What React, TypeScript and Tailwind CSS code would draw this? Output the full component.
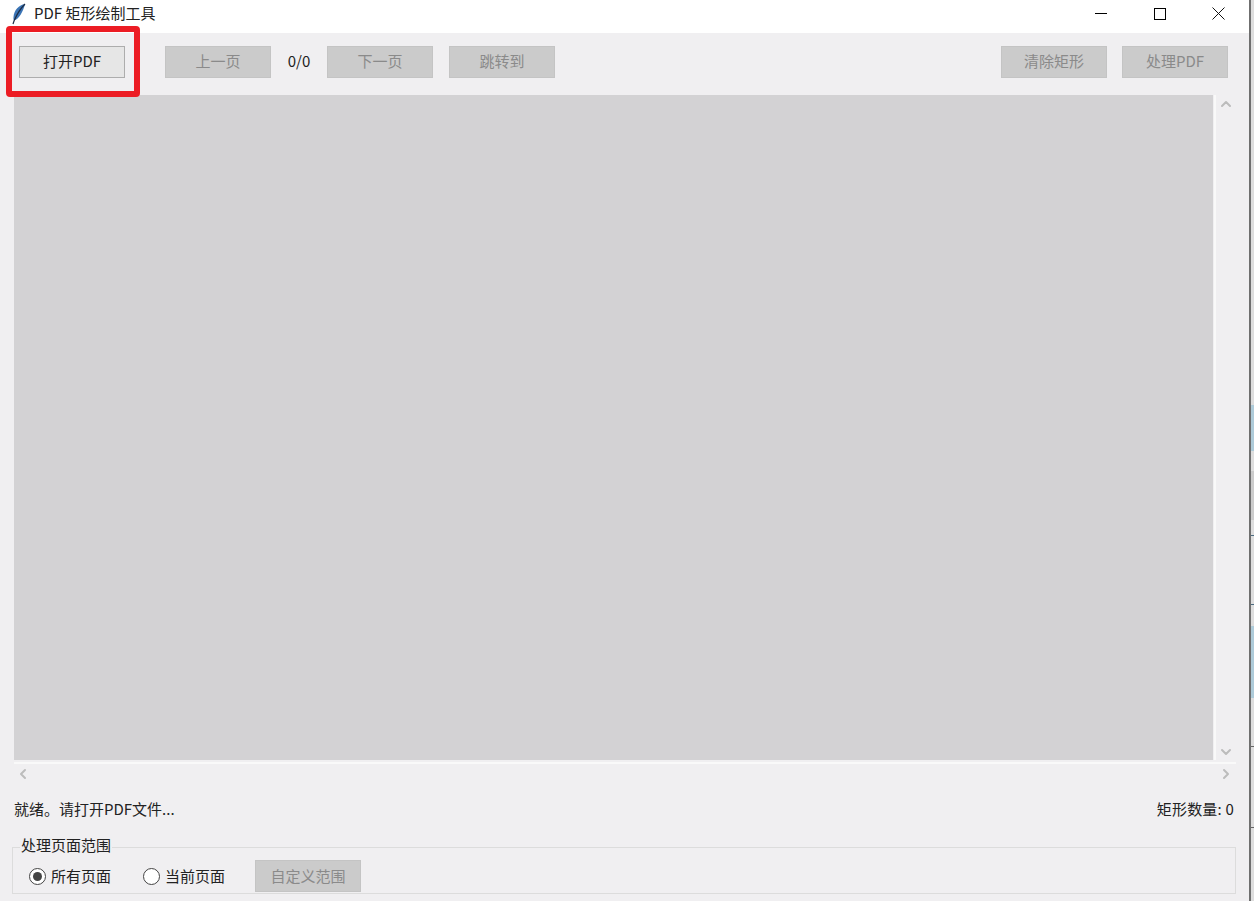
import { ChevronUp, ChevronDown, ChevronLeft, ChevronRight } from "lucide-react";

const font = "font-['Noto_Sans_CJK_SC','Liberation_Sans',sans-serif]";

function TkButton({ label, active = false, className = "" }: { label: string; active?: boolean; className?: string }) {
  return (
    <div
      className={`flex h-[32px] w-[106px] items-center justify-center border text-[15px] ${
        active
          ? "border-[#adadad] bg-[#e6e6e6] text-[#222222]"
          : "border-[#c4c4c4] bg-[#cbcbcb] text-[#8a8a8a]"
      } ${className}`}
    >
      {label}
    </div>
  );
}

function Radio({ label, checked = false }: { label: string; checked?: boolean }) {
  return (
    <div className="flex items-center gap-[5px] text-[15px] text-[#222222]">
      <div className="flex h-[17px] w-[17px] items-center justify-center rounded-full border border-[#444444] bg-white">
        {checked && <div className="h-[9px] w-[9px] rounded-full bg-[#444444]" />}
      </div>
      {label}
    </div>
  );
}

export default function App() {
  return (
    <div className={`relative flex h-[901px] w-[1254px] overflow-hidden bg-white ${font}`}>
      <div className="flex w-[1249px] shrink-0 flex-col bg-[#f0eff1]">
        {/* title bar */}
        <div className="flex h-[33px] items-center justify-between bg-white pb-[6px] pl-[11px] pr-[1px]">
          <div className="flex items-center gap-[7px] text-[15px] text-[#222222]">
            <svg width="16" height="22" viewBox="0 0 16 22">
              <path d="M14 1C8 2 3 7 2.5 14c-.2 2 0 3 .6 3.6C8 16 12 9 14 1z" fill="#3b74b5" />
              <path d="M14 1C10 5 6 11 3.2 17.5L2 21" fill="none" stroke="#1c2c44" strokeWidth="1.2" />
            </svg>
            <span>PDF 矩形绘制工具</span>
          </div>
          <div className="flex items-center">
            <div className="flex h-[27px] w-[59px] items-center justify-center">
              <div className="h-px w-[12px] bg-black" />
            </div>
            <div className="flex h-[27px] w-[59px] items-center justify-center">
              <div className="h-[12px] w-[12px] border border-black" />
            </div>
            <div className="flex h-[27px] w-[59px] items-center justify-center">
              <svg width="13" height="13" viewBox="0 0 13 13" stroke="#111111" strokeWidth="1">
                <path d="M.5.5l12 12M12.5.5l-12 12" />
              </svg>
            </div>
          </div>
        </div>

        {/* toolbar */}
        <div className="flex h-[62px] items-center pb-[5px] pl-[19px] pr-[21px]">
          <TkButton label="打开PDF" active />
          <TkButton label="上一页" className="ml-[40px]" />
          <span className="w-[56px] text-center text-[15px] text-[#222222]">0/0</span>
          <TkButton label="下一页" />
          <TkButton label="跳转到" className="ml-[16px]" />
          <TkButton label="清除矩形" className="ml-auto" />
          <TkButton label="处理PDF" className="ml-[15px]" />
        </div>

        {/* canvas + scrollbars */}
        <div className="flex pl-[14px] pr-[13px]">
          <div className="h-[665px] flex-1 bg-[#d3d2d4]" />
          <div className="ml-[1px] flex h-[665px] w-[22px] flex-col items-center justify-between border-l-2 border-[#f9f9f9] pt-px text-[#bcbcbc]">
            <ChevronUp size={16} strokeWidth={3} />
            <ChevronDown size={16} strokeWidth={3} className="mt-[2px]" />
          </div>
        </div>
        <div className="ml-[14px] mr-[13px] mt-[2px] flex h-[22px] items-center justify-between border-t-2 border-[#f9f9f9] pl-px text-[#bcbcbc]">
          <ChevronLeft size={16} strokeWidth={3} />
          <ChevronRight size={16} strokeWidth={3} className="mr-[2px]" />
        </div>

        {/* status */}
        <div className="mt-[13px] flex h-[24px] items-center justify-between pl-[14px] pr-[15px] text-[15px] text-[#222222]">
          <span>就绪。请打开PDF文件...</span>
          <span className="tracking-[0.2px]">矩形数量: 0</span>
        </div>

        {/* page range */}
        <div className="relative ml-[12px] mr-[13px] mt-[26px] flex h-[47px] items-center border border-[#dcdcdc] pl-[16px] pt-[11px]">
          <span className="absolute left-[7px] top-[-13px] bg-[#f0eff1] px-[1px] text-[15px] leading-[20px] text-[#222222]">
            处理页面范围
          </span>
          <Radio label="所有页面" checked />
          <div className="ml-[32px]">
            <Radio label="当前页面" />
          </div>
          <TkButton label="自定义范围" className="ml-[30px]" />
        </div>
      </div>

      {/* edge of the window behind */}
      <div className="flex w-[5px] flex-col border-l-2 border-[#6f6f6f] bg-[#dedede]">
        <div className="mt-[405px] h-[46px] bg-[#aecbd9]" />
        <div className="mt-[20px] h-[49px] bg-[#cccccc]" />
        <div className="mt-[15px] h-px bg-[#4a6a80]" />
        <div className="mt-[68px] h-px bg-[#4a6a80]" />
        <div className="mt-[21px] h-[72px] bg-[#aecbd9]" />
        <div className="mt-[48px] h-px bg-[#666666]" />
        <div className="mt-[80px] h-px bg-[#666666]" />
      </div>

      {/* red highlight */}
      <div className="absolute left-[6px] top-[26px] h-[71px] w-[134px] rounded-[4px] border-[6px] border-[#ec1c24]" />
    </div>
  );
}
